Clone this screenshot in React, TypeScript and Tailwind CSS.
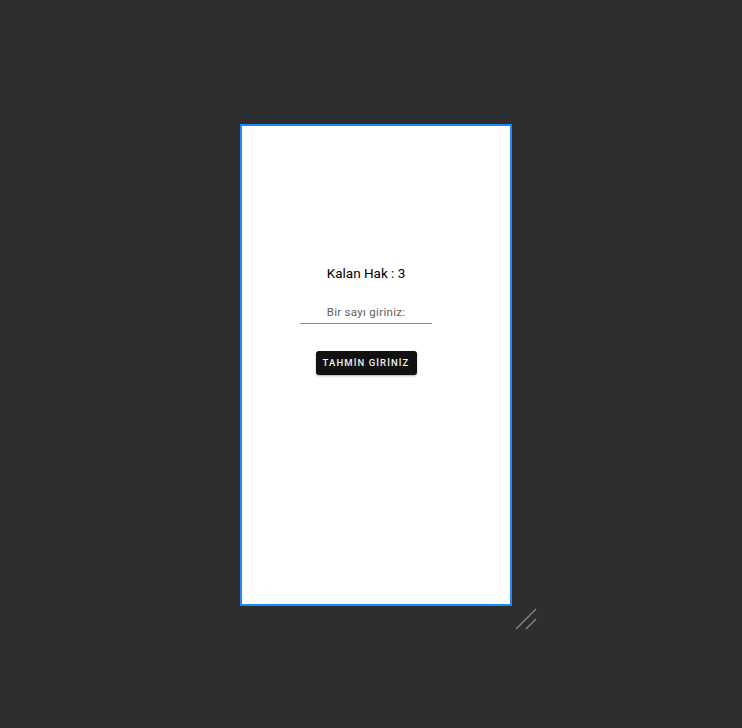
import React from "react"

export default function App() {
  return (
    <div className="relative h-[728px] w-[742px] overflow-hidden bg-[#2d2e30] font-['Roboto',sans-serif]">
      <div className="absolute left-[240px] top-[124px] h-[482px] w-[272px] border-2 border-[#1e88f5] bg-white">
        <div className="flex flex-col items-center pr-[20px] pt-[137px]">
          <p className="text-[13.5px] leading-[20px] text-black">Kalan Hak : 3</p>
          <div className="mt-[21px] w-[132px] border-b border-[#8a8a8a] pb-[3px] text-center text-[11.5px] leading-[16px] tracking-[0.3px] text-[#5f5f5f]">
            Bir sayı giriniz:
          </div>
          <button className="mt-[27px] h-[24px] w-[101px] rounded-[3px] bg-[#111] text-[9.5px] font-medium tracking-[1.1px] text-[#f2f2f2] shadow-[0_1px_2px_rgba(0,0,0,0.3)]">
            TAHMİN GİRİNİZ
          </button>
        </div>
      </div>
      <svg className="absolute left-[514px] top-[608px]" width="24" height="24" viewBox="0 0 24 24">
        <line x1="2" y1="21" x2="22" y2="1" stroke="#8a8a8a" strokeWidth="1.2" />
        <line x1="12" y1="21" x2="22" y2="11" stroke="#8a8a8a" strokeWidth="1.2" />
      </svg>
    </div>
  )
}
